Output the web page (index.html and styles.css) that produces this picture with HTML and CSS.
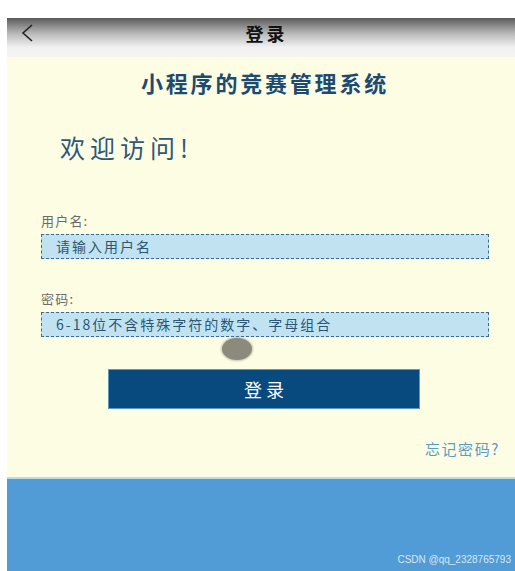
FILE: index.html
```html
<!DOCTYPE html>
<html lang="zh-CN">
<head>
    <meta charset="UTF-8">
    <meta name="viewport" content="width=device-width, initial-scale=1.0">
    <title>登录</title>
    <link rel="stylesheet" href="styles.css">
</head>
<body>
    <div class="app">
        <!-- 顶部导航 -->
        <div class="nav-bar">
            <svg class="nav-back" width="14" height="20" viewBox="0 0 14 20">
                <polyline points="11,2 2,10 11,18" fill="none" stroke="#222" stroke-width="1.6"/>
            </svg>
            <div class="nav-title">登录</div>
        </div>

        <!-- 登录内容 -->
        <div class="login-page">
            <div class="app-title">小程序的竞赛管理系统</div>
            <div class="welcome">欢迎访问!</div>

            <div class="login-form">
                <div class="field-label">用户名:</div>
                <div class="field-input">请输入用户名</div>

                <div class="field-label field-label-pwd">密码:</div>
                <div class="field-input">6-18位不含特殊字符的数字、字母组合</div>

                <div class="blob"></div>
            </div>

            <button class="login-btn">登录</button>

            <div class="forgot">忘记密码?</div>
        </div>

        <!-- 底部 -->
        <div class="footer">
            <span class="watermark">CSDN @qq_2328765793</span>
        </div>
    </div>
</body>
</html>
```

FILE: styles.css
```css
* {
    margin: 0;
    padding: 0;
    box-sizing: border-box;
}

body {
    font-family: "Noto Sans CJK SC", "Noto Sans", sans-serif;
    background-color: #ffffff;
    height: 571px;
    overflow: hidden;
}

.app {
    margin-left: 7px;
    padding-top: 18px;
    display: flex;
    flex-direction: column;
    height: 100%;
}

/* 顶部导航 */
.nav-bar {
    height: 39px;
    background: linear-gradient(#5b5b5b 0%, #b9b9b9 40%, #f1f1f1 75%, #f4f4f4 100%);
    display: flex;
    align-items: center;
    justify-content: center;
    position: relative;
}

.nav-back {
    position: absolute;
    left: 14px;
    top: 5px;
}

.nav-title {
    font-size: 18px;
    font-weight: bold;
    color: #111;
    letter-spacing: 3px;
    padding-left: 11px;
    margin-top: -10px;
}

/* 登录内容 */
.login-page {
    background-color: #fdfde3;
    height: 420px;
    padding-top: 10px;
    display: flex;
    flex-direction: column;
}

.app-title {
    font-size: 22px;
    line-height: 30px;
    font-weight: bold;
    color: #1c4a70;
    text-align: center;
    letter-spacing: 2.8px;
    margin-left: 8px;
}

.welcome {
    font-size: 25px;
    line-height: 34px;
    color: #2f5878;
    margin-top: 33px;
    padding-left: 53px;
    letter-spacing: 5px;
}

.login-form {
    margin-top: 47px;
    padding-left: 34px;
    width: 482px;
    display: flex;
    flex-direction: column;
}

.field-label {
    font-size: 13px;
    line-height: 20px;
    color: #6b6b6b;
    margin-bottom: 3px;
    letter-spacing: 1.2px;
}

.field-label-pwd {
    margin-top: 30px;
}

.field-input {
    height: 25px;
    background-color: #c1e3f1;
    border: 1px dashed #3f6c8c;
    padding-left: 14px;
    font-size: 14px;
    line-height: 23px;
    color: #2b5675;
    letter-spacing: 2px;
}

.blob {
    width: 30px;
    height: 22px;
    border-radius: 50%;
    background-color: #8b8a7c;
    box-shadow: 0 0 2px 1px rgba(139, 138, 124, 0.5);
    margin-top: 1px;
    margin-left: 181px;
}

.login-btn {
    margin-top: 9px;
    margin-left: 101px;
    width: 312px;
    height: 40px;
    background-color: #08497e;
    border: 1px solid #5f98bf;
    color: #ffffff;
    font-family: inherit;
    font-size: 18px;
    letter-spacing: 4px;
    padding-left: 4px;
}

.forgot {
    margin-top: 30px;
    align-self: flex-end;
    padding-right: 15px;
    font-size: 15px;
    line-height: 20px;
    color: #5b9cc6;
    letter-spacing: 1.6px;
}

/* 底部 */
.footer {
    flex: 1;
    background-color: #519cd7;
    border-top: 2px solid #b9dbee;
    display: flex;
    align-items: flex-end;
    justify-content: flex-end;
    padding: 0 4px 6px 0;
}

.watermark {
    font-family: "Liberation Sans", Arial, sans-serif;
    font-size: 10px;
    color: #d9e7f2;
}
```
